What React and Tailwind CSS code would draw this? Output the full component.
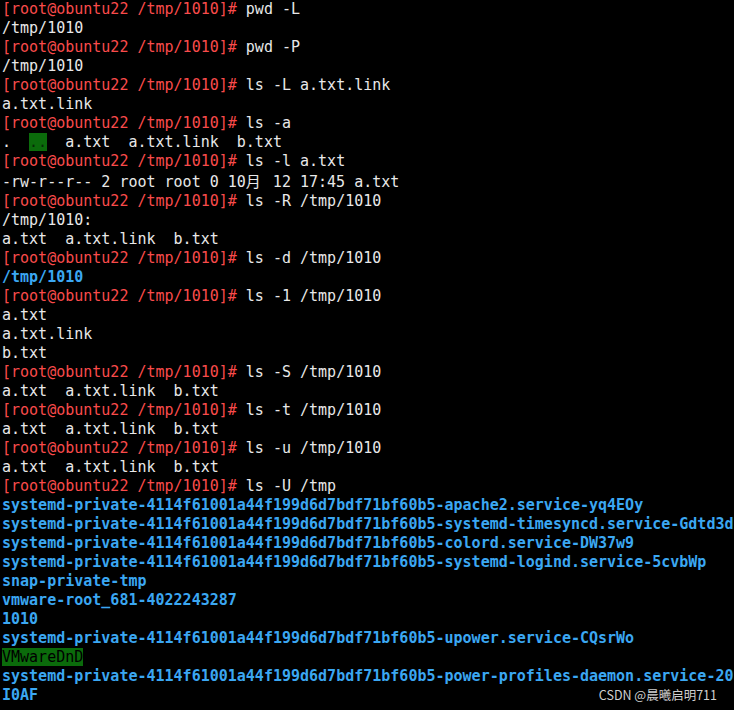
const PROMPT = '[root@obuntu22 /tmp/1010]#';
const HASH = 'systemd-private-4114f61001a44f199d6d7bdf71bf60b5';

const lines = [
  { cmd: 'pwd -L' },
  { out: '/tmp/1010' },
  { cmd: 'pwd -P' },
  { out: '/tmp/1010' },
  { cmd: 'ls -L a.txt.link' },
  { out: 'a.txt.link' },
  { cmd: 'ls -a' },
  { dots: true },
  { cmd: 'ls -l a.txt' },
  { month: true },
  { cmd: 'ls -R /tmp/1010' },
  { out: '/tmp/1010:' },
  { out: 'a.txt  a.txt.link  b.txt' },
  { cmd: 'ls -d /tmp/1010' },
  { dir: '/tmp/1010' },
  { cmd: 'ls -1 /tmp/1010' },
  { out: 'a.txt' },
  { out: 'a.txt.link' },
  { out: 'b.txt' },
  { cmd: 'ls -S /tmp/1010' },
  { out: 'a.txt  a.txt.link  b.txt' },
  { cmd: 'ls -t /tmp/1010' },
  { out: 'a.txt  a.txt.link  b.txt' },
  { cmd: 'ls -u /tmp/1010' },
  { out: 'a.txt  a.txt.link  b.txt' },
  { cmd: 'ls -U /tmp' },
  { dir: HASH + '-apache2.service-yq4EOy' },
  { dir: HASH + '-systemd-timesyncd.service-Gdtd3d' },
  { dir: HASH + '-colord.service-DW37w9' },
  { dir: HASH + '-systemd-logind.service-5cvbWp' },
  { dir: 'snap-private-tmp' },
  { dir: 'vmware-root_681-4022243287' },
  { dir: '1010' },
  { dir: HASH + '-upower.service-CQsrWo' },
  { sticky: 'VMwareDnD' },
  { dir: HASH + '-power-profiles-daemon.service-20' },
  { dir: 'I0AF' },
];

function Line({ l }) {
  if (l.cmd) {
    return (
      <div>
        <span className="text-[#f94b4b]">{PROMPT}</span>
        <span className="text-[#e8e8e8]"> {l.cmd}</span>
      </div>
    );
  }
  if (l.dir) return <div className="font-bold text-[#3ba7f2]">{l.dir}</div>;
  if (l.sticky) {
    return (
      <div>
        <span className="bg-[#0b6b0b] text-black">{l.sticky}</span>
      </div>
    );
  }
  if (l.dots) {
    return (
      <div className="text-[#e8e8e8]">
        {'.  '}
        <span className="bg-[#0b6b0b] text-[#062a06]">..</span>
        {'  a.txt  a.txt.link  b.txt'}
      </div>
    );
  }
  if (l.month) {
    return (
      <div className="text-[#e8e8e8]">
        {'-rw-r--r-- 2 root root 0 10'}
        <span className="inline-block w-[18px] font-['Noto_Sans_CJK_SC',sans-serif] text-[15px]">月</span>
        {' 12 17:45 a.txt'}
      </div>
    );
  }
  return <div className="text-[#e8e8e8]">{l.out}</div>;
}

export default function App() {
  return (
    <div className="relative h-[710px] w-[734px] overflow-hidden bg-black">
      <div className="whitespace-pre px-[2px] font-['DejaVu_Sans_Mono',monospace] text-[15px] leading-[19px]">
        {lines.map((l, i) => (
          <Line key={i} l={l} />
        ))}
      </div>
      <div className="absolute bottom-[6px] right-[17px] font-['Noto_Sans_CJK_SC',sans-serif] text-[12.5px] leading-[18px] text-[#d0d0d0]">
        CSDN @晨曦启明711
      </div>
    </div>
  );
}
